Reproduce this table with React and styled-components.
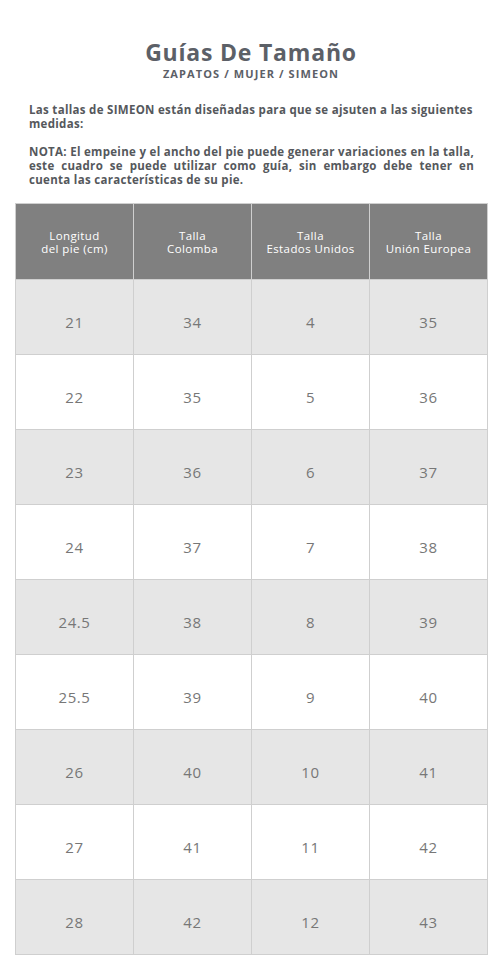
import React from 'react';
import styled, {createGlobalStyle} from 'styled-components';

const GlobalStyle = createGlobalStyle`
  body {
    margin: 0;
    background: #fff;
    font-family: "Open Sans", "DejaVu Sans", sans-serif;
  }
`;

const rows = [
  ['21', '34', '4', '35'],
  ['22', '35', '5', '36'],
  ['23', '36', '6', '37'],
  ['24', '37', '7', '38'],
  ['24.5', '38', '8', '39'],
  ['25.5', '39', '9', '40'],
  ['26', '40', '10', '41'],
  ['27', '41', '11', '42'],
  ['28', '42', '12', '43'],
];

const headers = [
  ['Longitud', 'del pie (cm)'],
  ['Talla', 'Colomba'],
  ['Talla', 'Estados Unidos'],
  ['Talla', 'Unión Europea'],
];

function App() {
  return (
    <Page>
      <GlobalStyle />
      <Heading>
        <h1>Guías De Tamaño</h1>
        <h2>ZAPATOS / MUJER / SIMEON</h2>
      </Heading>
      <Intro>
        <p>Las tallas de SIMEON están diseñadas para que se ajsuten a las siguientes medidas:</p>
        <p>NOTA: El empeine y el ancho del pie puede generar variaciones en la talla, este cuadro se puede utilizar como guía, sin embargo debe tener en cuenta las características de su pie.</p>
      </Intro>
      <Table>
        <HeadRow>
          {headers.map((h) => (
            <HeadCell key={h[1]}>
              <span>{h[0]}</span>
              <span>{h[1]}</span>
            </HeadCell>
          ))}
        </HeadRow>
        {rows.map((r, i) => (
          <Row key={r[0]} $shaded={i % 2 === 0}>
            {r.map((v, j) => (
              <Cell key={j}>{v}</Cell>
            ))}
          </Row>
        ))}
      </Table>
    </Page>
  );
}

const Page = styled.div`
  width: 502px;
  padding-top: 39px;
  box-sizing: border-box;
`;

const Heading = styled.div`
  text-align: center;
  color: #5c6067;

  h1 {
    margin: 0;
    font-size: 23px;
    line-height: 26px;
    font-weight: 700;
    letter-spacing: 0.8px;
  }

  h2 {
    margin: 2px 0 0;
    font-size: 11px;
    line-height: 14px;
    font-weight: 700;
    letter-spacing: 1.1px;
  }
`;

const Intro = styled.div`
  margin: 22px 28px 0 29px;
  color: #55585c;
  font-size: 11.5px;
  line-height: 14px;
  font-weight: 700;
  letter-spacing: 0.3px;
  text-align: justify;

  p {
    margin: 0 0 14px;
  }

  p:first-child {
    text-align: left;
  }

  p:last-child {
    margin-bottom: 0;
  }
`;

const Table = styled.div`
  margin: 16px 15px 0 15px;
  width: 472px;
  border-left: 1px solid #cfcfcf;
  border-top: 1px solid #cfcfcf;
`;

const HeadRow = styled.div`
  display: grid;
  grid-template-columns: repeat(4, 1fr);
  height: 76px;
  background: #808080;
`;

const HeadCell = styled.div`
  display: flex;
  flex-direction: column;
  align-items: center;
  justify-content: center;
  text-align: center;
  color: #fff;
  font-size: 11.5px;
  line-height: 13px;
  letter-spacing: 0.4px;
  border-right: 1px solid #cfcfcf;
  border-bottom: 1px solid #cfcfcf;
`;

const Row = styled.div`
  display: grid;
  grid-template-columns: repeat(4, 1fr);
  height: 75px;
  background: ${(p) => (p.$shaded ? '#e6e6e6' : '#ffffff')};
`;

const Cell = styled.div`
  display: flex;
  align-items: center;
  justify-content: center;
  color: #777777;
  font-size: 15px;
  letter-spacing: 0.6px;
  border-right: 1px solid #cfcfcf;
  border-bottom: 1px solid #cfcfcf;
  padding-top: 9px;
  box-sizing: border-box;
`;

export default App;
